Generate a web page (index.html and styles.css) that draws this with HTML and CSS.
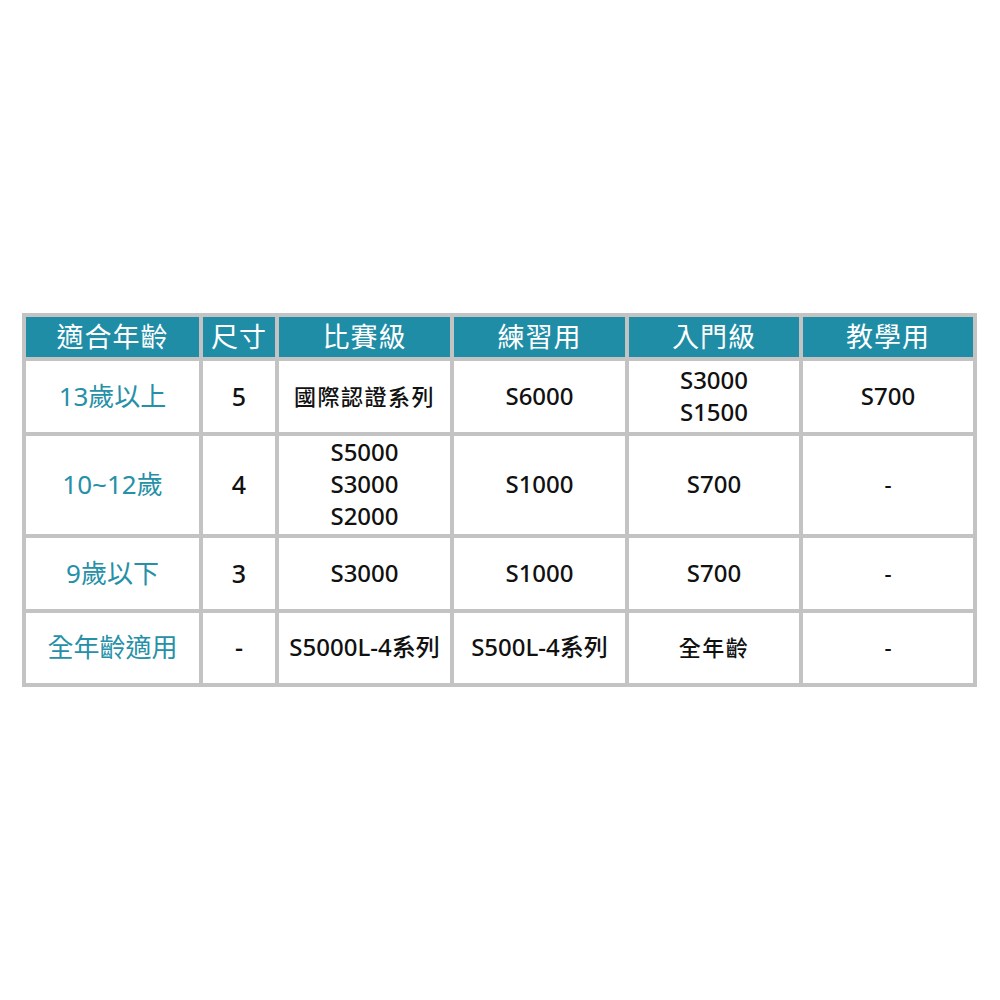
FILE: index.html
```html
<!DOCTYPE html>
<html lang="zh-Hant">
<head>
<meta charset="utf-8">
<title>適合年齡</title>
<link rel="stylesheet" href="styles.css">
</head>
<body>
<div class="table">
  <div class="cell head">適合年齡</div>
  <div class="cell head">尺寸</div>
  <div class="cell head">比賽級</div>
  <div class="cell head">練習用</div>
  <div class="cell head">入門級</div>
  <div class="cell head">教學用</div>

  <div class="cell age">13歲以上</div>
  <div class="cell size">5</div>
  <div class="cell cjk">國際認證系列</div>
  <div class="cell">S6000</div>
  <div class="cell">S3000<br>S1500</div>
  <div class="cell">S700</div>

  <div class="cell age">10~12歲</div>
  <div class="cell size">4</div>
  <div class="cell">S5000<br>S3000<br>S2000</div>
  <div class="cell">S1000</div>
  <div class="cell">S700</div>
  <div class="cell dash">-</div>

  <div class="cell age">9歲以下</div>
  <div class="cell size">3</div>
  <div class="cell">S3000</div>
  <div class="cell">S1000</div>
  <div class="cell">S700</div>
  <div class="cell dash">-</div>

  <div class="cell age">全年齡適用</div>
  <div class="cell size">-</div>
  <div class="cell">S5000L-4系列</div>
  <div class="cell">S500L-4系列</div>
  <div class="cell cjk">全年齡</div>
  <div class="cell dash">-</div>
</div>
</body>
</html>
```
FILE: styles.css
```css
html, body {
  margin: 0;
  padding: 0;
  background: #ffffff;
}
body {
  padding-top: 313px;
  padding-left: 22px;
  font-family: "Noto Sans", "Noto Sans CJK TC", sans-serif;
}
.table {
  display: grid;
  width: max-content;
  grid-template-columns: 173px 72px 171px 171px 170px 170px;
  grid-template-rows: 40px 71px 98px 71px 70px;
  gap: 4px;
  padding: 4px;
  background: #c3c3c3;
}
.cell {
  background: #ffffff;
  display: flex;
  align-items: center;
  justify-content: center;
  text-align: center;
  font-size: 24px;
  font-weight: 500;
  line-height: 32px;
  color: #111111;
  padding-bottom: 2px;
}
.head {
  background: #1f8da6;
  color: #ffffff;
  font-family: "Noto Sans CJK TC", sans-serif;
  font-size: 27px;
  font-weight: 400;
  letter-spacing: 1px;
  padding-bottom: 3px;
}
.age {
  color: #2690a8;
  font-size: 26px;
  font-weight: 400;
}
.size {
  font-size: 25px;
}
.cjk {
  font-size: 22px;
  letter-spacing: 1.5px;
}
.dash {
  font-size: 22px;
}
```
